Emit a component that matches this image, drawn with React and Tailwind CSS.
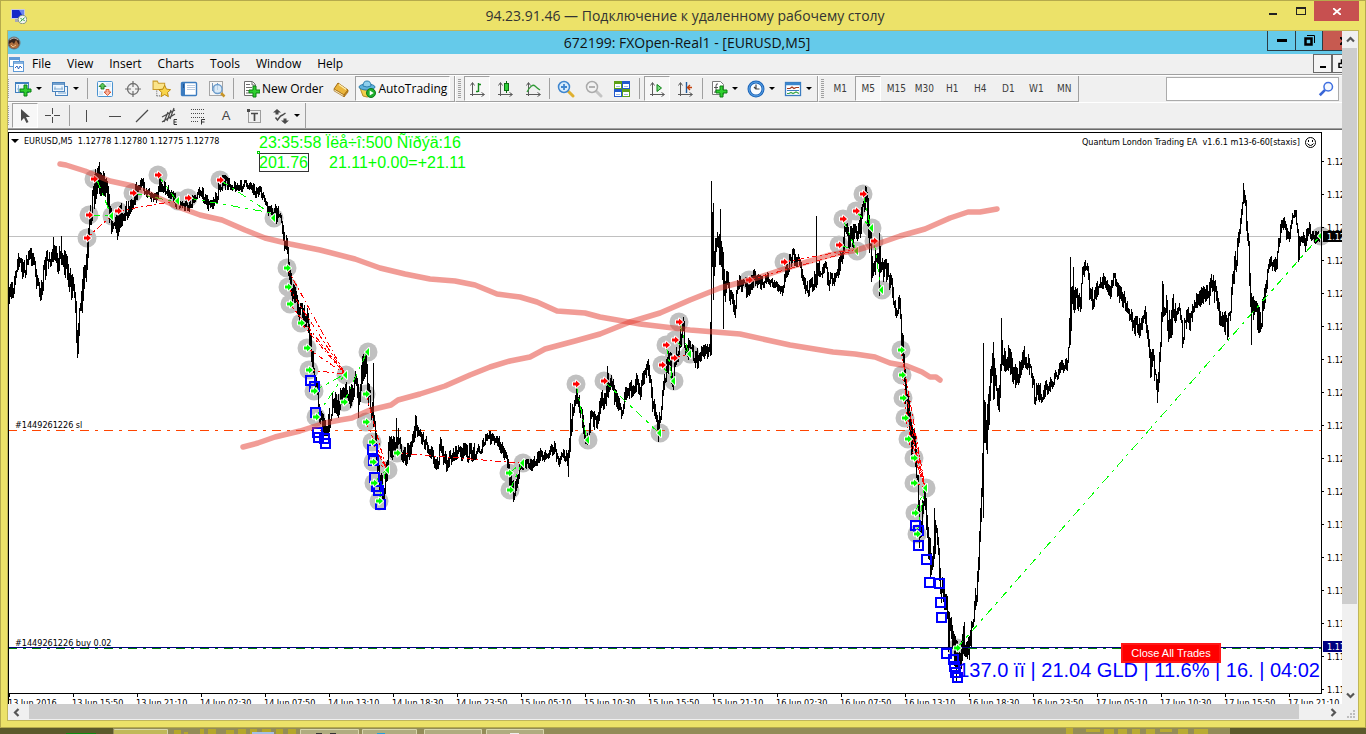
// App.jsx — trading terminal inside a remote desktop window

const LABEL_FONT = "font-['DejaVu_Sans_Condensed','DejaVu_Sans',sans-serif]";

/* ---------- chart data ---------- */

// [x, highest, lowest] of the price band
const BAND = [
  [9, 288, 311], [13, 275, 298], [17, 247, 268], [20, 256, 268], [23, 262, 284], [28, 249, 266], [33, 248, 263],
  [35, 265, 280], [38, 281, 300], [41, 275, 298], [46, 252, 274], [50, 248, 265], [53, 246, 263], [58, 248, 272],
  [61, 246, 264], [65, 252, 276], [70, 265, 293], [74, 285, 312], [77, 322, 356], [80, 300, 328], [83, 265, 303],
  [86, 255, 280], [88, 225, 265], [90, 190, 228], [93, 170, 212], [97, 163, 192], [100, 165, 194], [104, 174, 194],
  [108, 184, 215], [111, 205, 233], [114, 208, 224], [117, 210, 238], [120, 205, 226], [125, 202, 222], [130, 198, 212],
  [134, 185, 205], [140, 180, 190], [142, 177, 188], [146, 183, 198], [152, 195, 203], [157, 193, 202], [159, 176, 190],
  [162, 180, 190], [168, 186, 196], [175, 194, 206], [182, 201, 210], [188, 200, 211], [194, 193, 203], [198, 185, 195],
  [204, 190, 202], [208, 198, 214], [212, 198, 208], [217, 188, 202], [220, 176, 190], [225, 176, 188], [232, 182, 189],
  [238, 183, 192], [243, 179, 189], [250, 181, 188], [255, 186, 196], [262, 188, 198], [266, 202, 213], [270, 206, 218],
  [275, 205, 224], [279, 208, 216], [283, 226, 250], [286, 232, 248], [288, 255, 275], [290, 268, 290], [293, 285, 312],
  [297, 290, 312], [300, 298, 322], [303, 307, 325], [307, 303, 325], [309, 325, 348], [312, 345, 370], [315, 370, 388],
  [317, 385, 410], [320, 410, 426], [323, 415, 435], [326, 425, 441], [329, 405, 430], [333, 387, 408], [337, 398, 420],
  [342, 380, 400], [345, 382, 402], [350, 388, 406], [355, 372, 392], [358, 385, 412], [362, 357, 382], [366, 347, 372],
  [367, 365, 400], [370, 395, 420], [373, 400, 428], [375, 430, 457], [377, 445, 472], [380, 470, 497], [384, 478, 500],
  [386, 450, 487], [389, 435, 462], [394, 438, 456], [396, 420, 450], [400, 438, 456], [405, 448, 466], [410, 438, 456],
  [415, 415, 436], [420, 428, 440], [428, 440, 453], [437, 458, 472], [440, 438, 456], [446, 455, 470], [455, 446, 458],
  [462, 444, 459], [470, 444, 461], [480, 445, 455], [487, 430, 442], [495, 436, 445], [502, 438, 453], [508, 460, 480],
  [513, 483, 502], [518, 465, 482], [520, 455, 468], [525, 460, 468], [532, 460, 471], [540, 448, 459], [545, 451, 460],
  [554, 442, 452], [558, 458, 468], [562, 443, 455], [568, 448, 466], [570, 403, 440], [573, 406, 422], [577, 385, 402],
  [580, 398, 416], [585, 423, 442], [588, 420, 443], [591, 405, 421], [596, 417, 432], [600, 394, 412], [604, 388, 412],
  [608, 368, 396], [613, 380, 400], [617, 393, 410], [621, 408, 419], [625, 384, 402], [630, 383, 397], [636, 373, 390],
  [640, 387, 399], [643, 368, 386], [648, 360, 376], [652, 385, 410], [656, 408, 426], [658, 423, 442], [660, 398, 422],
  [663, 370, 392], [667, 350, 376], [670, 345, 368], [672, 376, 396], [675, 350, 372], [678, 338, 360], [680, 320, 346],
  [683, 318, 345], [687, 338, 360], [692, 345, 362], [697, 349, 369], [700, 348, 360], [705, 345, 357], [710, 345, 357],
  [711, 220, 300], [713, 205, 282], [716, 192, 250], [720, 235, 275], [722, 248, 286], [724, 270, 302], [728, 273, 292],
  [732, 293, 321], [735, 298, 316], [737, 275, 292], [742, 278, 290], [747, 278, 298], [753, 268, 286], [757, 275, 290],
  [762, 277, 288], [767, 273, 283], [775, 282, 289], [782, 284, 294], [786, 262, 278], [792, 248, 262], [797, 253, 266],
  [800, 260, 272], [805, 275, 292], [808, 280, 295], [812, 278, 290], [816, 265, 286], [820, 260, 275], [826, 262, 279],
  [828, 273, 292], [834, 274, 286], [838, 260, 276], [842, 240, 262], [845, 220, 242], [849, 228, 250], [853, 225, 246],
  [857, 225, 245], [860, 213, 236], [863, 190, 212], [866, 188, 216], [869, 205, 255], [871, 250, 284], [874, 255, 276],
  [878, 235, 262], [882, 259, 280], [887, 260, 282], [892, 279, 296], [895, 300, 318], [899, 296, 310], [901, 315, 350],
  [903, 350, 382], [906, 380, 412], [909, 405, 432], [912, 428, 460], [914, 428, 455], [916, 450, 482], [918, 490, 530],
  [920, 520, 546], [923, 488, 512], [925, 488, 512], [928, 528, 565], [931, 545, 580], [933, 512, 560], [937, 530, 552],
  [940, 558, 592], [943, 588, 618], [946, 592, 620], [948, 612, 650], [951, 612, 642], [953, 632, 672], [956, 640, 680],
  [960, 648, 674], [963, 612, 652], [966, 636, 657], [969, 636, 661], [972, 615, 640], [974, 590, 612], [977, 572, 600],
  [981, 488, 520], [983, 400, 470], [987, 405, 450], [989, 362, 405], [993, 350, 395], [996, 378, 402], [999, 385, 416],
  [1001, 330, 362], [1004, 343, 372], [1010, 348, 380], [1016, 368, 390], [1023, 345, 366], [1028, 355, 375],
  [1032, 375, 402], [1036, 384, 403], [1040, 384, 403], [1045, 382, 395], [1050, 378, 390], [1056, 368, 380],
  [1062, 359, 371], [1067, 357, 369], [1070, 300, 345], [1072, 275, 312], [1075, 288, 311], [1080, 288, 310],
  [1083, 258, 280], [1087, 262, 277], [1090, 288, 309], [1095, 288, 306], [1099, 272, 286], [1105, 274, 288],
  [1110, 283, 297], [1114, 271, 286], [1119, 286, 302], [1127, 295, 311], [1132, 314, 332], [1140, 319, 337],
  [1145, 305, 322], [1148, 330, 350], [1150, 350, 382], [1153, 350, 372], [1157, 373, 400], [1160, 328, 360],
  [1162, 284, 316], [1166, 288, 312], [1168, 315, 346], [1173, 295, 330], [1178, 298, 312], [1182, 322, 346],
  [1187, 308, 326], [1190, 308, 330], [1195, 293, 306], [1203, 284, 305], [1208, 287, 308], [1212, 270, 290],
  [1214, 275, 312], [1218, 297, 322], [1222, 296, 325], [1227, 322, 338], [1231, 288, 312], [1234, 248, 282],
  [1237, 238, 264], [1241, 198, 218], [1243, 184, 208], [1245, 196, 214], [1248, 235, 262], [1251, 298, 340],
  [1255, 296, 313], [1258, 308, 335], [1263, 298, 322], [1267, 262, 280], [1272, 256, 269], [1276, 254, 271],
  [1280, 222, 236], [1284, 218, 231], [1288, 232, 246], [1292, 210, 221], [1295, 209, 223], [1298, 233, 262],
  [1301, 233, 249], [1304, 233, 255], [1308, 221, 233], [1313, 232, 243], [1319, 232, 240],
];

// single bars that run far outside the band
const SPIKES = [
  [53, 237, 262], [61, 236, 262], [77, 330, 358], [99, 162, 190], [117, 214, 240], [358, 385, 418], [373, 363, 400],
  [396, 418, 440], [513, 480, 502], [568, 450, 477], [570, 403, 452], [607, 366, 392], [658, 420, 442], [710, 322, 355],
  [711, 181, 355], [713, 203, 300], [723, 252, 329], [720, 209, 262], [816, 216, 288], [865, 186, 210], [879, 233, 296],
  [911, 420, 455], [919, 500, 548], [934, 508, 540], [956, 640, 682], [969, 636, 660], [983, 343, 518], [987, 410, 454],
  [993, 342, 400], [1001, 318, 365], [1070, 257, 345], [1073, 267, 310], [1157, 380, 403], [1162, 281, 320],
  [1243, 183, 200], [1251, 300, 345],
];

const OPENS_RED = [
  [87, 238], [89, 215], [94, 179], [118, 211], [133, 193], [158, 175], [188, 198], [220, 180], [576, 384], [604, 381],
  [662, 365], [666, 345], [675, 340], [674, 358], [679, 322], [749, 280], [784, 262], [839, 245], [843, 219], [856, 211],
  [863, 194], [874, 241],
];
const OPENS_GREEN = [
  [287, 268], [288, 287], [290, 304], [301, 323], [307, 348], [309, 370], [314, 391], [316, 417], [344, 402],
  [366, 394], [366, 422], [372, 442], [373, 462], [374, 483], [379, 501], [397, 453], [509, 473], [510, 490],
  [901, 350], [902, 375], [903, 398], [905, 418], [908, 439], [914, 458], [914, 483], [915, 513], [917, 534], [957, 648],
];
const CLOSES = [
  [111, 216], [177, 201], [273, 218], [345, 375], [367, 352], [387, 470], [522, 463], [587, 440], [659, 433],
  [673, 381], [689, 354], [856, 251], [871, 228], [881, 290], [925, 488], [1320, 236],
];

const RED_LINKS = [
  [87, 238, 111, 216], [118, 211, 176, 201], [287, 268, 345, 374], [288, 287, 345, 374], [290, 304, 345, 374],
  [301, 323, 345, 374], [307, 348, 345, 374], [309, 370, 345, 374], [366, 394, 386, 468], [366, 422, 386, 468],
  [372, 442, 386, 468], [373, 462, 386, 468], [397, 453, 520, 463], [674, 358, 689, 354], [749, 280, 856, 250],
  [784, 262, 856, 249], [901, 350, 925, 487], [902, 375, 925, 487], [903, 398, 925, 487], [905, 418, 925, 487],
  [908, 439, 925, 487], [914, 458, 925, 487], [914, 483, 925, 487],
];
const GREEN_LINKS = [
  [91, 215, 111, 216], [97, 180, 111, 215], [133, 193, 177, 202], [158, 175, 177, 201], [188, 198, 272, 213],
  [220, 180, 273, 215], [314, 391, 345, 374], [316, 417, 345, 374], [344, 402, 367, 352], [374, 483, 386, 470],
  [379, 501, 386, 470], [509, 473, 522, 463], [510, 490, 522, 463], [576, 384, 587, 440], [604, 381, 659, 433],
  [662, 365, 673, 381], [666, 345, 673, 381], [675, 340, 689, 354], [679, 322, 689, 354], [839, 245, 856, 250],
  [843, 219, 856, 250], [856, 211, 871, 228], [863, 194, 871, 228], [874, 241, 881, 290], [915, 513, 925, 488],
  [917, 534, 925, 488], [957, 648, 1320, 236],
];
const SQUARES = [
  [311, 381], [315, 387], [316, 413], [318, 433], [319, 438], [325, 439], [326, 444], [373, 450], [374, 461],
  [375, 478], [377, 487], [379, 491], [381, 505], [916, 526], [919, 531], [919, 546], [927, 560], [930, 583],
  [940, 584], [941, 603], [942, 618], [947, 654], [954, 660], [955, 667], [956, 673], [958, 678],
];

const DATES = [
  "13 Jun 2016", "13 Jun 15:50", "13 Jun 21:10", "14 Jun 02:30", "14 Jun 07:50", "14 Jun 13:10", "14 Jun 18:30",
  "14 Jun 23:50", "15 Jun 05:10", "15 Jun 10:30", "15 Jun 15:50", "15 Jun 21:10", "16 Jun 02:30", "16 Jun 07:50",
  "16 Jun 13:10", "16 Jun 18:30", "16 Jun 23:50", "17 Jun 05:10", "17 Jun 10:30", "17 Jun 15:50", "17 Jun 21:10",
];
const PRICES = [
  "1.129", "1.128", "1.128", "1.127", "1.127", "1.126", "1.126", "1.125", "1.125", "1.124", "1.123", "1.11", "1.11",
  "1.11", "1.11", "1.11", "1.11",
];

function buildBars() {
  let seed = 7;
  const rand = () => {
    seed = (seed * 16807) % 2147483647;
    return seed / 2147483647;
  };
  let d = "";
  let k = 0;
  let prev = 300;
  for (let x = 9; x < 1320; x++) {
    while (k < BAND.length - 2 && BAND[k + 1][0] <= x) k++;
    const [x0, t0, b0] = BAND[k];
    const [x1, t1, b1] = BAND[k + 1];
    const f = Math.min(1, (x - x0) / (x1 - x0));
    const top = t0 + (t1 - t0) * f;
    const size = b0 + (b1 - b0) * f - top;
    const close = top + size * (0.05 + 0.9 * rand());
    const hi = Math.max(Math.min(prev, close) - size * 0.45 * rand(), Math.min(top - 1, prev));
    const lo = Math.min(Math.max(prev, close) + size * 0.45 * rand(), Math.max(top + size + 1, prev));
    d += `M${x + 0.5} ${Math.round(hi)}V${Math.round(lo) + 1}`;
    prev = close;
  }
  SPIKES.forEach(([x, a, b]) => {
    d += `M${x + 0.5} ${a}V${b}`;
  });
  return d;
}

const BARS = buildBars();

/* ---------- chart ---------- */

function Chart() {
  return (
    <div className="relative min-h-0 flex-1 overflow-hidden bg-white">
      <svg
        viewBox="8 130 1334 574"
        preserveAspectRatio="xMinYMin slice"
        className={`block h-full w-full text-[9px] ${LABEL_FONT}`}
        role="img"
        aria-label="EURUSD M5"
      >
        <g shapeRendering="crispEdges">
          <path d="M8 236.500H1321" stroke="#c0c0c0" />
          <g fill="#c0c0c0" shapeRendering="auto">
            {[...OPENS_RED, ...OPENS_GREEN].map(([x, y], i) => <circle key={i} cx={x} cy={y} r="9.500" />)}
            {CLOSES.map(([x, y], i) => <circle key={i} cx={x + 1} cy={y} r="9.500" />)}
          </g>
          <path d="M8 430.500H1321" stroke="#ff4500" strokeDasharray="9 6 3 6" />
          <path d={BARS} stroke="#000" />
          <path d="M8 648.500H1321" stroke="#008000" strokeDasharray="9 6 3 6" />
          <path d="M8 647.500H1321" stroke="#000080" />
          <g stroke="#f00" strokeDasharray="6 3 2 3">
            {RED_LINKS.map(([a, b, c, d], i) => <path key={i} d={`M${a} ${b}L${c} ${d}`} />)}
          </g>
          <g stroke="#0f0" strokeDasharray="9 5 3 5">
            {GREEN_LINKS.map(([a, b, c, d], i) => <path key={i} d={`M${a} ${b}L${c} ${d}`} />)}
          </g>
          <g fill="none" stroke="#00f" strokeWidth="2">
            {SQUARES.map(([x, y], i) => <rect key={i} x={x - 5} y={y - 5} width="9" height="9" />)}
          </g>
        </g>
        <g stroke="#fff" strokeWidth="2" paintOrder="stroke" strokeLinejoin="round">
          {OPENS_RED.map(([x, y], i) => (
            <path key={i} fill="#f00" d={`M${x - 3} ${y - 1.5}h3v-2l4 3.500l-4 3.500v-2h-3z`} />
          ))}
          {OPENS_GREEN.map(([x, y], i) => (
            <path key={i} fill="#0f0" d={`M${x - 3} ${y - 1.5}h3v-2l4 3.500l-4 3.500v-2h-3z`} />
          ))}
          {CLOSES.map(([x, y], i) => <path key={i} fill="#0f0" d={`M${x - 2} ${y}l4 -4v8z`} />)}
        </g>
        <g fill="none" stroke="#e43a2e" strokeOpacity="0.5" strokeWidth="5.500" strokeLinecap="round" strokeLinejoin="round">
          <path d="M60 164L66 165L85 171L110 181L133 186L152 195L178 207L200 215L222 220L245 230L265 238L290 244L320 250L355 259L380 268L405 274L430 279L455 281L475 285L497 294L520 297L537 302L557 311L585 313L600 317L640 324L690 330L740 334L790 345L833 352L855 354L875 357L890 363L907 366L922 372L930 377L936 377L940 380" />
          <path d="M243 447L258 443L275 437L300 431L325 423L340 420L352 418L370 410L391 405L398 400L420 394L445 386L470 375L490 367L510 361L530 357L545 349L575 341L600 334L630 322L660 313L690 300L720 288L760 277L790 267L830 255L857 250L880 243L900 236L925 229L950 218L968 212L980 212L997 209" />
        </g>

        <g shapeRendering="crispEdges" stroke="#000" fill="none">
          <path d="M8.500 704V132.500H1321.500V693.500H8" />
          {DATES.map((t, i) => <path key={t} d={`M${9.5 + 64 * i} 693V697`} />)}
          {PRICES.map((t, i) => <path key={i} d={`M1321 ${161.5 + 33 * i}H1324`} />)}
        </g>
        <path d="M11 139h8l-4 4z" />
        <text x="24" y="144" xmlSpace="preserve">EURUSD,M5  1.12778 1.12780 1.12775 1.12778</text>
        <text x="1082" y="145" xmlSpace="preserve">Quantum London Trading EA  v1.6.1 m13-6-60[staxis]</text>
        <g fill="none" stroke="#000">
          <circle cx="1310.500" cy="142.500" r="5" />
          <path d="M1307.500 143.500q3 4 6 0" />
          <path d="M1308.500 140v2M1312.500 140v2" />
        </g>
        <text x="15" y="428">#1449261226 sl</text>
        <text x="15" y="646">#1449261226 buy 0.02</text>
        {DATES.map((t, i) => <text key={t} x={8 + 64 * i} y="706">{t}</text>)}
        {PRICES.map((t, i) => <text key={i} x="1327" y={165 + 33 * i}>{t}</text>)}
        <path d="M1323 231h19v11h-19z" />
        <path d="M1323 641h19v11h-19z" fill="#000080" />
        <g fill="#fff">
          <text x="1327" y="240">1.127</text>
          <text x="1327" y="650">1.11</text>
        </g>

        <g className="font-['Liberation_Sans',sans-serif] text-[16px]" fill="#0f0">
          <text x="259" y="148">23:35:58 Ïëå÷î:500 Ñïðýä:16</text>
          <text x="259" y="168">201.76</text>
          <text x="329" y="168">21.11+0.00=+21.11</text>
        </g>
        <rect x="259.500" y="153.500" width="49" height="18" fill="none" stroke="#333" />
        <rect x="257.500" y="151.500" width="2" height="2" fill="#fff" stroke="#0c0" />
        <text x="1320" y="677" textAnchor="end" fill="#00f" className="font-['Liberation_Sans',sans-serif] text-[20px]">
          137.0 ïï | 21.04 GLD | 11.6% | 16. | 04:02
        </text>
      </svg>
      <button className="absolute right-[121px] bottom-[41px] h-5 w-[100px] border-2 border-[#ff1818] bg-[#f00] font-['Liberation_Sans',sans-serif] text-[11px] leading-4 text-white">
        Close All Trades
      </button>
    </div>
  );
}

/* ---------- toolbar parts ---------- */

const PRESSED = "border-t border-l border-t-[#a0a0a0] border-l-[#a0a0a0] border-r border-b border-r-white border-b-white bg-[#f7f7f7]";

function Icon({ children, size = 18 }) {
  return (
    <svg width={size} height={size} viewBox="0 0 18 18" fill="none" className="shrink-0" aria-hidden="true">
      {children}
    </svg>
  );
}

function Tool({ label, pressed, children }) {
  return (
    <button aria-label={label} className={`flex h-[25px] items-center justify-center ${pressed ? `mx-px w-[26px] ${PRESSED}` : "w-7"}`}>
      {children}
    </button>
  );
}

function MenuTool({ label, children }) {
  return (
    <button aria-label={label} className="flex h-[25px] w-[37px] items-center gap-1 pl-1">
      {children}
      <svg width="6" height="3" viewBox="0 0 6 3" aria-hidden="true"><path d="M0 0h6l-3 3z" /></svg>
    </button>
  );
}

const Sep = ({ wide }) => <span className={`h-[21px] w-px bg-[#a0a0a0] ${wide ? "mx-[3px]" : "mx-[2px]"}`} />;
const Grip = () => (
  <span className="mx-[2px] h-[19px] w-[3px] bg-[repeating-linear-gradient(to_bottom,#a0a0a0_0_1px,#f0f0f0_1px_2px)]" />
);

const Plus = ({ x, y }) => (
  <path d={`M${x} ${y}h3v4h4v3h-4v4h-3v-4h-4v-3h4z`} fill="#2fd02f" stroke="#0b7f12" />
);
const Axes = () => (
  <path d="M4.500 3v13M2 14.500h14M2.500 5.500l2 -3l2 3M13.500 12.500l3 2l-3 2" stroke="#5a5a5a" />
);

function Lens({ ring, fill, handle, sign }) {
  return (
    <Icon>
      <path d="M11 11l5 5" stroke={handle} strokeWidth="3" strokeLinecap="round" />
      <circle cx="7" cy="7" r="5.500" fill={fill} stroke={ring} strokeWidth="1.500" />
      <path d={sign} stroke={ring} strokeWidth="1.800" />
    </Icon>
  );
}

function MainToolbar() {
  return (
    <div className="-mr-6 flex h-[27px] items-center border-t border-white">
      <div className="flex h-[26px] items-center border-r border-b border-[#a0a0a0] pr-1">
        <span className="h-[19px] w-px bg-[repeating-linear-gradient(to_bottom,#a0a0a0_0_1px,#f0f0f0_1px_2px)]" />
        <span className="w-px" />
        <MenuTool label="New chart">
          <Icon>
            <rect x="1.500" y="2.500" width="13" height="10" fill="#eef6fd" stroke="#3f7fbf" />
            <path d="M1.500 3h13" stroke="#3f7fbf" strokeWidth="2" />
            <path d="M3 9h3M4.500 5v7" stroke="#88b4dc" />
            <Plus x={10} y={5} />
          </Icon>
        </MenuTool>
        <MenuTool label="Profiles">
          <Icon>
            <rect x="4.500" y="6.500" width="12" height="9" fill="#eef6fd" stroke="#4a83bd" />
            <rect x="1.500" y="2.500" width="12" height="9" fill="#eef6fd" stroke="#4a83bd" />
            <path d="M2 4h11" stroke="#4a83bd" strokeWidth="1.500" />
            <path d="M3 9h9M4 6.500v3M11 6.500v3M7 13h8" stroke="#7fa8cf" />
          </Icon>
        </MenuTool>
        <Sep wide />
        <Tool label="Market Watch">
          <Icon>
            <rect x="1.500" y="1.500" width="15" height="15" rx="1" fill="#f4faff" stroke="#4a93d0" />
            <path d="M10 4h5M10 6h5M3 12h4M3 14h4" stroke="#bcd6ec" />
            <path d="M6.500 3l3.500 3.500h-2v2.500h-3v-2.500h-2z" fill="#5cc85c" stroke="#137013" strokeWidth=".8" />
            <path d="M11.500 15.500l3.500 -3.500h-2v-2.500h-3v2.500h-2z" fill="#fbb49e" stroke="#d2421c" strokeWidth=".8" />
          </Icon>
        </Tool>
        <Tool label="Data Window">
          <Icon>
            <circle cx="9" cy="9" r="5.500" stroke="#707070" strokeWidth="1.300" />
            <path d="M9 1v6M9 11v6M1 9h6M11 9h6" stroke="#707070" strokeWidth="1.200" />
          </Icon>
        </Tool>
        <Tool label="Navigator">
          <Icon size={19}>
            <path d="M1 2h4l1 2h6v6H1z" fill="#fbe489" stroke="#c99b2a" />
            <path d="M4.500 11v6M4.500 16h3" stroke="#777" strokeDasharray="1 1" />
            <path d="M12 6l1.700 3.600l3.900 .5l-2.900 2.700l.8 3.900l-3.500 -2l-3.500 2l.8 -3.900l-2.900 -2.700l3.900 -.5z" fill="#f9d54a" stroke="#b8860b" strokeWidth=".9" />
          </Icon>
        </Tool>
        <Tool label="Terminal">
          <Icon>
            <rect x="1.500" y="2.500" width="15" height="13" rx="1" fill="#fff" stroke="#3b7cc0" strokeWidth="1.400" />
            <path d="M2 3h3v12h-3z" fill="#3b7cc0" />
            <path d="M7 5.500h8M7 7.500h8M7 9.500h8" stroke="#b9cbe0" />
            <path d="M3 5h1M3 7h1" stroke="#0a2f66" />
          </Icon>
        </Tool>
        <Tool label="Strategy Tester">
          <Icon>
            <rect x="1.500" y="1.500" width="13" height="14" fill="#f6f6f6" stroke="#a5a5a5" />
            <path d="M4.500 3v8M6.500 5v7M9.500 3v7" stroke="#7b98b8" />
            <path d="M13 13l3.500 3.500" stroke="#c89527" strokeWidth="2.500" />
            <circle cx="9.500" cy="9" r="4.500" fill="#cfe6f8" fillOpacity=".7" stroke="#6b9ccc" strokeWidth="1.300" />
          </Icon>
        </Tool>
        <Sep />
        <button className="ml-[6px] flex h-[25px] items-center gap-[2px] pr-1 text-[12px] leading-4">
          <Icon>
            <path d="M2.500 1.500h8l3 3v11h-11z" fill="#fff" stroke="#6e6e6e" />
            <path d="M10 2v3h3M4 4.500h4M4 7.500h6M4 10.500h4M4 13h3" stroke="#6e6e6e" />
            <Plus x={11} y={6} />
          </Icon>
          New Order
        </button>
        <Tool label="MetaEditor">
          <Icon>
            <path d="M6 3l10 7l-4 5l-10 -6z" fill="#eab53c" stroke="#a06a12" />
            <path d="M2 9l10 6v1.800l-10 -6z" fill="#fff3c8" stroke="#a06a12" strokeWidth=".7" />
            <path d="M12 15l4 -5v2l-4 5z" fill="#c98a1c" stroke="#a06a12" strokeWidth=".7" />
            <path d="M7 4.500l7 5" stroke="#fff0b0" strokeWidth="1.300" />
          </Icon>
        </Tool>
        <button className={`flex h-[25px] items-center gap-[2px] px-[2px] text-[12px] leading-4 ${PRESSED}`}>
          <Icon>
            <path d="M2 8q6 4 13 0l-2 8q-4 2 -8 0z" fill="#f2cf4a" stroke="#b8902a" />
            <ellipse cx="9" cy="7" rx="8" ry="3" fill="#5fb2dc" stroke="#2d7fae" />
            <path d="M5 6q0 -5 4 -5t4 5q-4 2 -8 0z" fill="#8fd0ee" stroke="#2d7fae" />
            <circle cx="13" cy="13" r="4.500" fill="#1fae2c" stroke="#0d7a18" />
            <path d="M11.700 10.500l4 2.500l-4 2.500z" fill="#fff" />
          </Icon>
          AutoTrading
        </button>
      </div>
      <div className="flex h-[26px] items-center border-r border-b border-l border-[#a0a0a0] border-l-white">
        <Grip />
        <Tool label="Bar chart" pressed>
          <Icon><Axes /><path d="M10.500 3v9M10 4.500h3M8 11.500h2" stroke="#178a1e" strokeWidth="1.400" /></Icon>
        </Tool>
        <Tool label="Candlesticks">
          <Icon><Axes /><path d="M10.500 1v12" stroke="#0b6d12" /><rect x="8.500" y="3.500" width="4" height="7" fill="#2fd03a" stroke="#0b6d12" /></Icon>
        </Tool>
        <Tool label="Line chart">
          <Icon><Axes /><path d="M3 12q5 -9 8 -6q2 2 5 4" stroke="#2f9a36" strokeWidth="1.300" /></Icon>
        </Tool>
        <Sep />
        <Tool label="Zoom In">
          <Lens ring="#3f86cf" fill="#d8ecfb" handle="#dfb02f" sign="M7 4v6M4 7h6" />
        </Tool>
        <Tool label="Zoom Out">
          <Lens ring="#aaaaaa" fill="#f2f2f2" handle="#c4c4c4" sign="M4 7h6" />
        </Tool>
        <Tool label="Tile Windows">
          <Icon>
            <path d="M1 1h8v8h-8zM9 9h8v8h-8z" fill="#5c9f17" />
            <path d="M9 1h8v8h-8zM1 9h8v8h-8z" fill="#2058cc" />
            <path d="M2 4h6v4h-6zM10 4h6v4h-6zM2 12h6v4h-6zM10 12h6v4h-6z" fill="#fff" />
            <path d="M3 6.500h4M11 6.500h4M3 14.500h4M11 14.500h4" stroke="#9ebbe0" />
          </Icon>
        </Tool>
        <Sep wide />
        <Tool label="Auto Scroll" pressed>
          <Icon><Axes /><path d="M9 4.500l4.500 3.500l-4.500 3.500z" fill="#7be082" stroke="#0b7f12" /></Icon>
        </Tool>
        <Tool label="Chart Shift">
          <Icon><Axes /><path d="M10.500 2v11" stroke="#1c5a9c" strokeWidth="1.400" /><path d="M16 7.500h-4M14 5l-2.500 2.500l2.500 2.500" stroke="#c2410c" strokeWidth="1.400" /></Icon>
        </Tool>
        <Sep wide />
        <MenuTool label="Indicators">
          <Icon>
            <path d="M2.500 1.500h8l3 3v10h-11z" fill="#fff" stroke="#7a7a7a" />
            <path d="M8 4q-2 -1 -2 2v5q0 2 -2 1M4 7.500h4" stroke="#555" />
            <Plus x={10} y={6} />
          </Icon>
        </MenuTool>
        <MenuTool label="Periods">
          <Icon>
            <circle cx="9" cy="9" r="7" fill="#f7fbff" stroke="#1c64b8" strokeWidth="3" />
            <circle cx="9" cy="9" r="7" stroke="#5fa8ea" />
            <path d="M9 4.500v4.500h3.500M9 9l-2 -2" stroke="#444" strokeWidth="1.200" />
          </Icon>
        </MenuTool>
        <MenuTool label="Templates">
          <Icon>
            <rect x="1.500" y="2.500" width="15" height="13" fill="#fff" stroke="#3b7cc0" strokeWidth="1.300" />
            <path d="M1.500 4h15" stroke="#3b86cc" strokeWidth="2.500" />
            <path d="M3 8.500h3l2 -1.500l2 1.500l2 -1h3" stroke="#a33618" strokeWidth="1.200" />
            <path d="M3 10.500h12" stroke="#3b7cc0" />
            <path d="M3 13.500h2l2 -1l2 1l3 -1.500l3 1.500" stroke="#3aa546" strokeWidth="1.200" />
          </Icon>
        </MenuTool>
      </div>
      <div className="flex h-[26px] items-center border-r border-b border-l border-[#a0a0a0] border-l-white text-[10px] text-[#3c3c3c]">
        <Grip />
        {["M1", "M5", "M15", "M30", "H1", "H4", "D1", "W1", "MN"].map((t) => (
          <Tool key={t} label={t} pressed={t === "M5"}>
            <span className={LABEL_FONT}>{t}</span>
          </Tool>
        ))}
      </div>
      <label className="mr-[27px] ml-auto flex h-6 w-[173px] items-center border border-[#ababab] bg-white pr-1">
        <input type="search" aria-label="Search" className="min-w-0 flex-1 text-[11px] outline-none" />
        <Icon size={16}>
          <path d="M8 10l-6 6" stroke="#3a66d6" strokeWidth="3" />
          <circle cx="11.500" cy="6.500" r="4.800" fill="#f4f8ff" stroke="#3f6fe0" strokeWidth="1.700" />
        </Icon>
      </label>
    </div>
  );
}

function LineToolbar() {
  return (
    <div className="-mr-6 flex h-7 items-start border-b border-[#696969]">
      <div className="flex h-[27px] w-full items-start border-t border-b border-t-white border-b-[#a0a0a0]">
        <div className="flex h-[25px] items-center border-r border-[#a0a0a0]">
          <span className="mr-[2px] h-[19px] w-px bg-[repeating-linear-gradient(to_bottom,#a0a0a0_0_1px,#f0f0f0_1px_2px)]" />
          <Tool label="Cursor" pressed>
            <Icon><path d="M5 2v12l3 -3l2.500 5l2 -1l-2.500 -5h4z" fill="#4a4a4a" /></Icon>
          </Tool>
          <Tool label="Crosshair">
            <Icon><path d="M8.500 1v6M8.500 10v6M1 8.500h6M10 8.500h6" stroke="#4a4a4a" /></Icon>
          </Tool>
          <Sep />
          <Tool label="Vertical Line">
            <Icon><path d="M9.500 3v12" stroke="#4a4a4a" /></Icon>
          </Tool>
          <Tool label="Horizontal Line">
            <Icon><path d="M4 9.500h12" stroke="#4a4a4a" /></Icon>
          </Tool>
          <Tool label="Trendline">
            <Icon><path d="M3 15l12 -12" stroke="#4a4a4a" strokeWidth="1.200" /></Icon>
          </Tool>
          <Tool label="Equidistant Channel">
            <Icon>
              <path d="M1 10l13 -7M1 15l13 -8M3 15l4 -10M6 14l4 -11M9 12l4 -11" stroke="#4a4a4a" strokeWidth="1.200" />
              <path d="M16 12.500h-3v5h3M13 15h2.500" stroke="#333" />
            </Icon>
          </Tool>
          <Tool label="Fibonacci Retracement">
            <Icon>
              <path d="M2 2.500h14M2 6.500h14M2 10.500h14M2 14.500h8" stroke="#4a4a4a" strokeDasharray="1 1" />
              <path d="M16 12.500h-3.500v5M13 15h2.500" stroke="#333" />
            </Icon>
          </Tool>
          <Tool label="Text">
            <span className="font-['Liberation_Sans',sans-serif] text-[13px] leading-4 text-[#444]">A</span>
          </Tool>
          <Tool label="Text Label">
            <Icon>
              <rect x="3.500" y="3.500" width="12" height="12" stroke="#4a4a4a" strokeDasharray="1 1" />
              <path d="M6 6.500h7M9.500 6v8" stroke="#4a4a4a" strokeWidth="1.700" />
              <path d="M2 2h3v3h-3z" fill="#4a4a4a" />
            </Icon>
          </Tool>
          <MenuTool label="Arrows">
            <Icon>
              <path d="M5 2l4 3.500h-2.500v2h-3v-2h-2.500zM13 17l-4 -3.500h2.500v-2h3v2h2.500z" fill="#4a4a4a" />
              <path d="M3.500 10.500l2 2.500l3 -4l2 -1l3 -2" stroke="#4a4a4a" strokeWidth="1.500" />
            </Icon>
          </MenuTool>
        </div>
      </div>
    </div>
  );
}

/* ---------- remote desktop content ---------- */

function RemoteTitle() {
  return (
    <div className="-mr-6 flex h-[23px] bg-[#65caea]">
      <div className="flex flex-1 basis-0 items-center">
        <svg width="14" height="14" viewBox="0 0 14 14" aria-hidden="true">
          <circle cx="6" cy="7" r="6.500" fill="#777" />
          <circle cx="6" cy="7" r="5.300" fill="#38241a" />
          <path d="M1 8l3 -2l2 2l2 -4l3 5l-2 3h-6z" fill="#b06f3c" />
          <path d="M3 9l2 2l3 -2" stroke="#f0c48e" fill="none" />
          <path d="M2 4q4 -4 8 0" stroke="#b9b9b9" fill="none" />
        </svg>
      </div>
      <h2 className="text-[14px] leading-[23px] text-[#111]">672199: FXOpen-Real1 - [EURUSD,M5]</h2>
      <div className="flex flex-1 basis-0 items-start justify-end">
        <button aria-label="Minimize" className="flex h-5 w-[29px] items-center justify-center border border-t-0 border-[#2b3b44]">
          <span className="h-[3px] w-[10px] bg-black" />
        </button>
        <button aria-label="Restore" className="flex h-5 w-[26px] items-center justify-center border-b border-[#2b3b44]">
          <svg width="11" height="11" viewBox="0 0 11 11" fill="none" stroke="#000" aria-hidden="true">
            <path d="M3 .5h7.500v7.500" />
            <path d="M1.500 3.500h6v6h-6z" strokeWidth="2.500" />
          </svg>
        </button>
        <button aria-label="Close" className="flex h-5 w-[44px] items-center justify-center border border-t-0 border-[#2b3b44] bg-[#c75a50]">
          <svg width="8" height="8" viewBox="0 0 8 8" stroke="#000" strokeWidth="2" aria-hidden="true"><path d="M0 0l8 8M8 0l-8 8" /></svg>
        </button>
      </div>
    </div>
  );
}

function MenuBar() {
  return (
    <nav className="-mr-6 flex h-[21px] items-center border-b border-[#a0a0a0] text-[12px] leading-4">
      <svg width="15" height="15" viewBox="0 0 15 15" className="ml-px" aria-hidden="true">
        <rect x=".5" y=".5" width="10" height="9" fill="#fff" stroke="#5f9ad6" />
        <path d="M1 2h9" stroke="#5f9ad6" strokeWidth="2" />
        <rect x="4.500" y="4.500" width="10" height="10" fill="#fff" stroke="#5f9ad6" />
        <path d="M5 6h9" stroke="#5f9ad6" strokeWidth="1.500" />
        <path d="M6 11l2 -2l1.500 3l1.500 -3l2 2" fill="none" stroke="#2f66c0" />
      </svg>
      {["File", "View", "Insert", "Charts", "Tools", "Window", "Help"].map((t) => (
        <button key={t} className="px-2">{t}</button>
      ))}
      <div className="mr-[14px] ml-auto flex self-stretch pb-px">
        <button aria-label="Minimize chart" className="flex w-[19px] items-end justify-center border border-[#696969] bg-[#f4f4f4] pb-1">
          <span className="h-[2px] w-[6px] bg-black" />
        </button>
        <button aria-label="Restore chart" className="flex w-5 items-center justify-center border border-[#696969] bg-[#f4f4f4]">
          <svg width="9" height="9" viewBox="0 0 9 9" fill="none" stroke="#000" aria-hidden="true">
            <path d="M1 4.500h5v4h-5zM3.500 4v-3h5v5h-2" strokeWidth="1.500" />
          </svg>
        </button>
      </div>
    </nav>
  );
}

function Chevron({ d }) {
  return (
    <svg width="9" height="9" viewBox="0 0 9 9" fill="none" stroke="#555" strokeWidth="2.200" aria-hidden="true">
      <path d={d} />
    </svg>
  );
}

function WindowTitle() {
  return (
    <header className="flex h-[29px] shrink-0">
      <div className="flex flex-1 basis-0 items-center pl-[10px]">
        <svg width="16" height="16" viewBox="0 0 16 16" aria-hidden="true">
          <path d="M0 1h14v10h-14z" fill="#c9cbdc" />
          <path d="M1 2h12v8h-12z" fill="#1226c8" />
          <path d="M8 2h5v8z" fill="#6c86ee" />
          <path d="M4 11h6v3h-6z" fill="#a9abb8" />
          <circle cx="11.500" cy="11.500" r="4.300" fill="#f2f5ee" stroke="#83917c" />
          <path d="M9.500 10l1.800 1.800l-1.800 1.800M13.700 9.500l-1.800 1.800l1.800 1.800" stroke="#1d9a2f" fill="none" />
        </svg>
      </div>
      <h1 className="text-[14px] leading-[29px] text-[#333]">94.23.91.46 — Подключение к удаленному рабочему столу</h1>
      <div className="flex flex-1 basis-0 items-start justify-end pr-[6px] text-[#222]">
        <button aria-label="Minimize" className="flex h-5 w-7 items-end justify-center pb-[6px]">
          <span className="h-[2px] w-2 bg-[#222]" />
        </button>
        <button aria-label="Maximize" className="flex h-5 w-[27px] items-center justify-center">
          <span className="h-2 w-[10px] border border-t-2 border-[#222]" />
        </button>
        <button aria-label="Close" className="flex h-5 w-[45px] items-center justify-center bg-[#c75050]">
          <svg width="8" height="7" viewBox="0 0 8 7" stroke="#fff" strokeWidth="1.800" aria-hidden="true"><path d="M0 0l8 7M8 0l-8 7" /></svg>
        </button>
      </div>
    </header>
  );
}

function Taskbar() {
  return (
    <svg viewBox="0 0 1366 6" preserveAspectRatio="none" className="block h-[6px] w-full shrink-0" aria-hidden="true">
      <path d="M0 0h1366v6h-1366z" fill="#938c58" />
      <path d="M0 0h113v6h-113zM1230 0h136v6h-136z" fill="#5c5a2c" />
      <path d="M66 5h30v1h-30z" fill="#0f8a10" />
      <g stroke="#d8d6ae" fill="#b0ac80">
        <path d="M114.500 7v-5.500h53v5.500zM300.500 7v-5.500h58v5.500zM362.500 7v-5.500h54v5.500zM424.500 7v-5.500h57v5.500zM486.500 7v-5.500h57v5.500z" />
      </g>
      <path d="M114 2h53v4h-53z" fill="#c0b95a" />
      <path d="M174 2h7v4h-7zM184 4h4v2h-4zM200 1h4v5h-4zM208 1h8v5h-8zM226 2h8v4h-8zM238 1h8v5h-8zM250 1h7v5h-7zM262 1h9v5h-9zM276 1h7v5h-7zM288 1h8v5h-8z" fill="#b5a72a" />
      <path d="M252 4h22v2h-22z" fill="#a4c0e6" />
      <path d="M316 5h6v1h-6zM330 5h6v1h-6z" fill="#333" />
      <path d="M377 5h8v1h-8z" fill="#23a0dc" />
      <path d="M510 5h9v1h-9z" fill="#eee" />
      <path d="M1066 0h7v6h-7zM1086 1h14v3h-14zM1104 1h10v5h-10zM1118 1h9v5h-9zM1132 1h8v5h-8zM1146 1h9v5h-9zM1160 1h12v3h-12zM1178 1h10v5h-10zM1194 1h14v5h-14z" fill="#b9ab32" />
    </svg>
  );
}

export default function App() {
  return (
    <div className="flex h-screen flex-col font-['Open_Sans','Noto_Sans',sans-serif] text-black">
      <div className="flex min-h-0 flex-1 flex-col border border-[#b5aa4c] bg-[#ece269]">
        <WindowTitle />
        <main className="mx-[6px] mb-[6px] flex min-h-0 flex-1 flex-col border border-[#c0b65a] bg-[#f0f0f0]">
          <div className="flex min-h-0 flex-1">
            <div className="flex min-w-0 flex-1 flex-col overflow-hidden">
              <RemoteTitle />
              <MenuBar />
              <MainToolbar />
              <LineToolbar />
              <Chart />
            </div>
            <div className="flex w-4 flex-col items-center bg-[#f0f0f0]">
              <button aria-label="Scroll up" className="flex h-[17px] w-full shrink-0 items-center justify-center">
                <Chevron d="M1 6.500l3.500 -3.500l3.500 3.500" />
              </button>
              <div className="flex w-full flex-1 flex-col">
                <div className="mr-px h-[87%] bg-[#cdcdcd]" />
              </div>
              <button aria-label="Scroll down" className="flex h-[17px] w-full shrink-0 items-center justify-center">
                <Chevron d="M1 2.500l3.500 3.500l3.500 -3.500" />
              </button>
            </div>
          </div>
          <div className="flex h-4 shrink-0">
            <button aria-label="Scroll left" className="flex w-[21px] items-center justify-center pr-1">
              <Chevron d="M6.500 1l-3.500 3.500l3.500 3.500" />
            </button>
            <div className="flex-1">
              <div className="h-[15px] w-[98%] bg-[#cdcdcd]" />
            </div>
            <button aria-label="Scroll right" className="flex w-[17px] items-center justify-center">
              <Chevron d="M2.500 1l3.500 3.500l-3.500 3.500" />
            </button>
            <svg width="16" height="16" viewBox="0 0 16 16" fill="#bdbdbd" aria-hidden="true">
              <path d="M11 6h2v2h-2zM8 9h2v2h-2zM11 9h2v2h-2zM5 12h2v2h-2zM8 12h2v2h-2zM11 12h2v2h-2z" />
            </svg>
          </div>
        </main>
      </div>
      <Taskbar />
    </div>
  );
}
